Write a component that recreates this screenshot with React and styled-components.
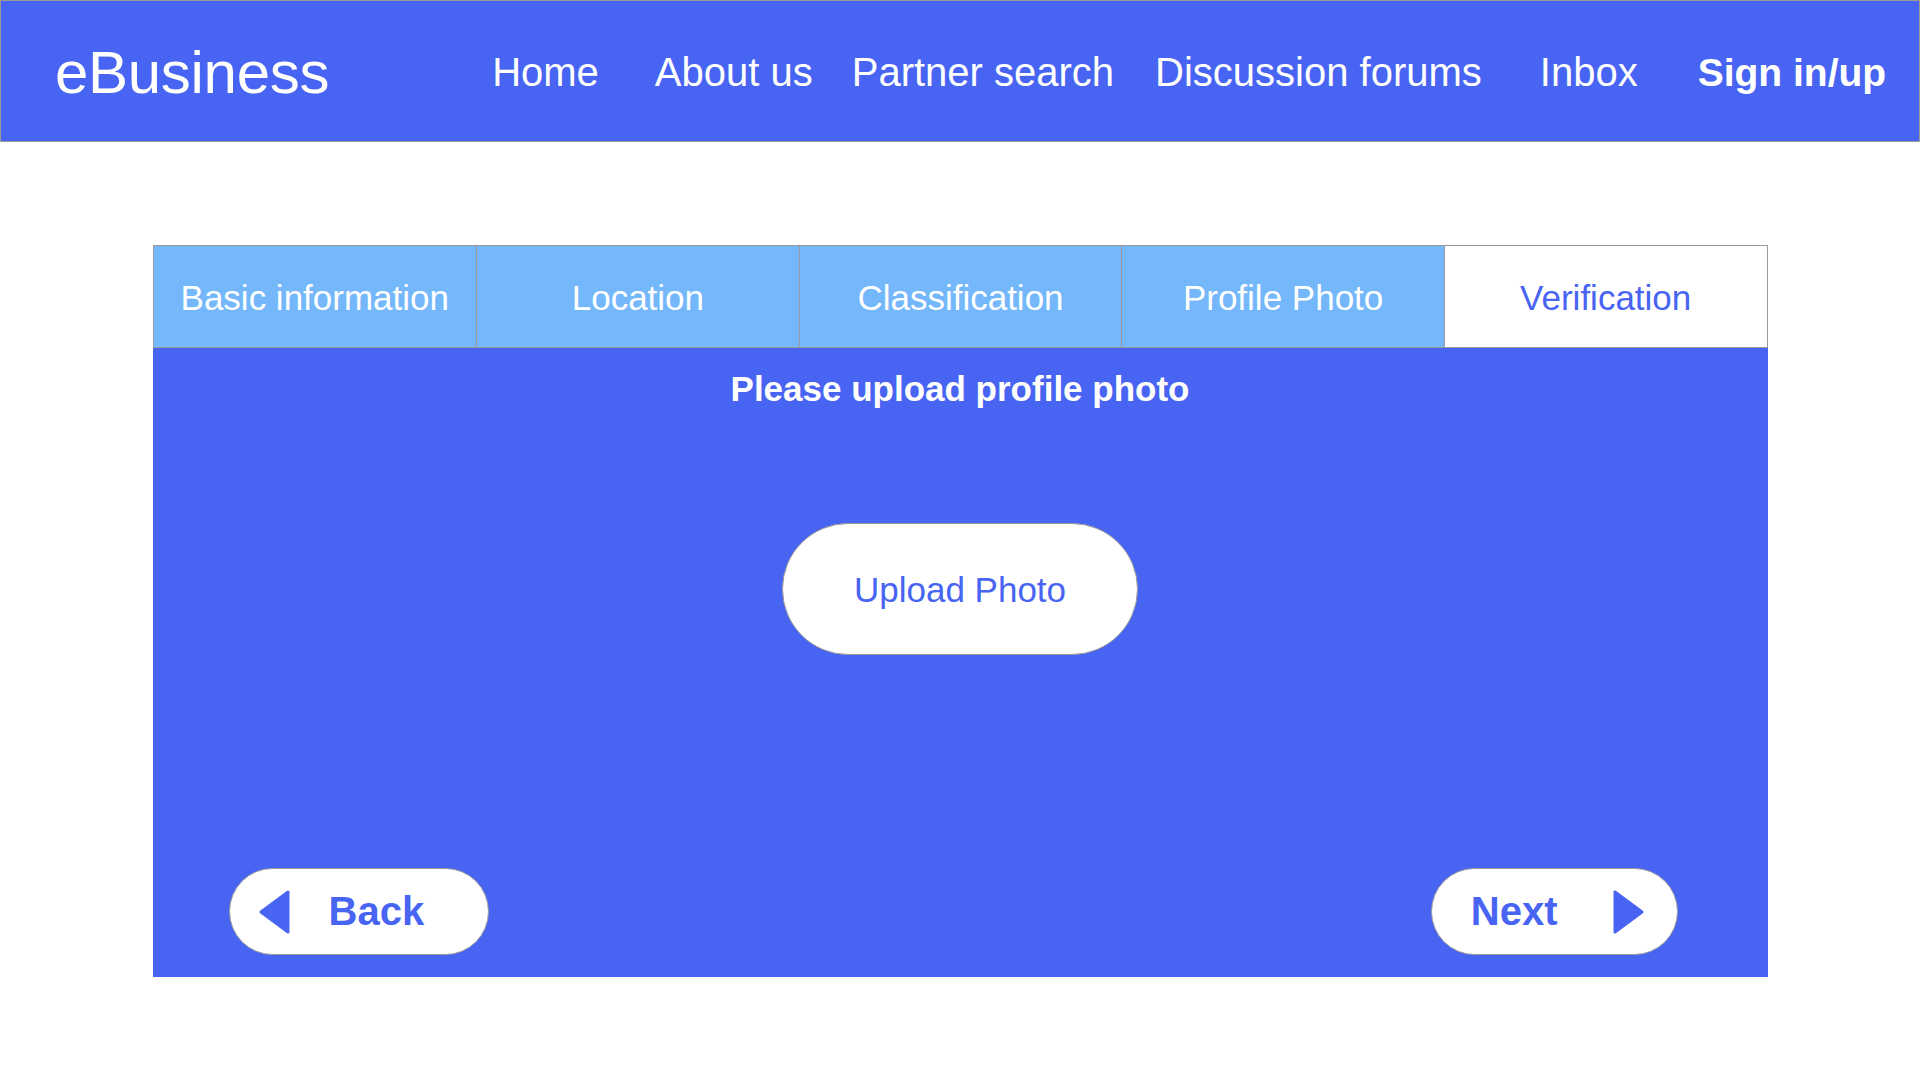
import React from "react";
import styled, { createGlobalStyle } from "styled-components";

const BLUE = "#4864f2";
const LIGHT = "#74b8fb";
const LINE = "#9a9a9a";

const GlobalStyle = createGlobalStyle`
  html, body {
    margin: 0;
    padding: 0;
    background: #ffffff;
    font-family: "Liberation Sans", Arial, sans-serif;
  }
  * {
    box-sizing: border-box;
  }
`;

/* HEADER */
const Header = styled.header`
  height: 142px;
  display: flex;
  align-items: center;
  padding: 3px 0 0 54px;
  background-color: ${BLUE};
  border: 1px solid ${LINE};
  color: #fff;
`;

const Logo = styled.div`
  font-size: 60px;
  line-height: 1;
  letter-spacing: -0.3px;
`;

const Nav = styled.nav`
  display: flex;
  align-items: center;
`;

const NavLink = styled.div`
  margin-left: ${(p) => p.$space}px;
  font-size: ${(p) => (p.$bold ? 39 : 40)}px;
  font-weight: ${(p) => (p.$bold ? 700 : 400)};
  white-space: nowrap;
  cursor: pointer;
`;

/* WIZARD */
const Wizard = styled.section`
  width: 1615px;
  margin: 103px auto 0;
`;

const TabBar = styled.div`
  display: grid;
  grid-template-columns: repeat(5, 1fr);
  height: 103px;
  border: 1px solid ${LINE};
`;

const Tab = styled.div`
  display: flex;
  align-items: center;
  justify-content: center;
  padding-top: 2px;
  font-size: 35px;
  background-color: ${(p) => (p.$active ? "#fff" : LIGHT)};
  color: ${(p) => (p.$active ? BLUE : "#fff")};
  & + & {
    border-left: 1px solid ${LINE};
  }
`;

const Panel = styled.div`
  height: 629px;
  display: flex;
  flex-direction: column;
  align-items: center;
  padding: 21px 0 22px;
  background-color: ${BLUE};
`;

const Title = styled.h2`
  margin: 0;
  font-size: 35px;
  line-height: 40px;
  font-weight: 700;
  color: #fff;
`;

const UploadButton = styled.button`
  margin-top: 114px;
  width: 356px;
  height: 132px;
  padding-top: 2px;
  border: 1px solid ${LINE};
  border-radius: 66px;
  background: #fff;
  color: ${BLUE};
  font-family: inherit;
  font-size: 35px;
  cursor: pointer;
`;

const Footer = styled.div`
  margin-top: auto;
  align-self: stretch;
  display: flex;
  justify-content: space-between;
  padding: 0 90px 0 76px;
`;

const StepButton = styled.button`
  height: 87px;
  display: flex;
  align-items: center;
  gap: ${(p) => p.$gap}px;
  padding: ${(p) => p.$pad};
  border: 1px solid ${LINE};
  border-radius: 44px;
  background: #fff;
  color: ${BLUE};
  font-family: inherit;
  font-size: 40px;
  font-weight: 700;
  cursor: pointer;
`;

const Arrow = ({ dir }) => (
  <svg width="32" height="46" viewBox="0 0 32 46">
    <polygon
      points={dir === "left" ? "30,3 30,43 3,23" : "2,3 2,43 29,23"}
      fill={BLUE}
      stroke={BLUE}
      strokeWidth="3"
      strokeLinejoin="round"
    />
  </svg>
);

const tabs = [
  "Basic information",
  "Location",
  "Classification",
  "Profile Photo",
  "Verification",
];

const links = [
  { label: "Home", space: 163 },
  { label: "About us", space: 56 },
  { label: "Partner search", space: 39 },
  { label: "Discussion forums", space: 41 },
  { label: "Inbox", space: 58 },
];

export default function App() {
  return (
    <>
      <GlobalStyle />
      <Header>
        <Logo>eBusiness</Logo>
        <Nav>
          {links.map((l) => (
            <NavLink key={l.label} $space={l.space}>
              {l.label}
            </NavLink>
          ))}
          <NavLink $space={60} $bold>
            Sign in/up
          </NavLink>
        </Nav>
      </Header>

      <Wizard>
        <TabBar>
          {tabs.map((t) => (
            <Tab key={t} $active={t === "Verification"}>
              {t}
            </Tab>
          ))}
        </TabBar>
        <Panel>
          <Title>Please upload profile photo</Title>
          <UploadButton>Upload Photo</UploadButton>
          <Footer>
            <StepButton $gap={39} $pad="0 64px 0 28px">
              <Arrow dir="left" />
              Back
            </StepButton>
            <StepButton $gap={55} $pad="0 32px 0 39px">
              Next
              <Arrow dir="right" />
            </StepButton>
          </Footer>
        </Panel>
      </Wizard>
    </>
  );
}
